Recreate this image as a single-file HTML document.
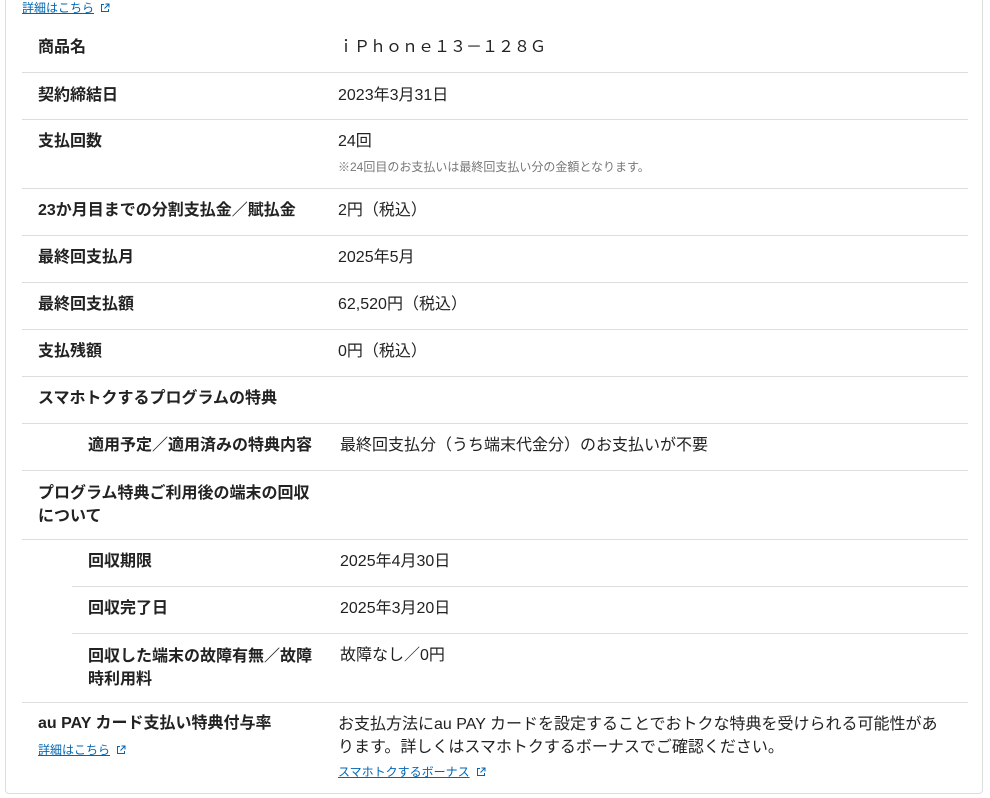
<!DOCTYPE html>
<html><head><meta charset="utf-8"><style>
body{margin:0;width:990px;height:798px;background:#fff;font-family:"Liberation Sans","Noto Sans CJK JP",sans-serif;color:#222;position:relative;overflow:hidden}
.card{position:absolute;left:5px;top:-10px;width:978px;height:804px;border:1px solid #ddd;border-radius:4px;box-sizing:border-box}
.t{position:absolute;line-height:22px;font-size:16px;white-space:nowrap}
.b{font-weight:bold}
.l{position:absolute;height:1px;background:#ddd;right:22px}
.a{position:absolute;font-size:12px;color:#0066b3;text-decoration:underline;line-height:16px;white-space:nowrap}
.a svg{vertical-align:-1px;margin-left:6px}
.n{position:absolute;font-size:12px;color:#777;line-height:16px;white-space:nowrap}
</style></head><body>
<div class="card"></div>
<div class="a" style="left:22px;top:0">詳細はこちら<svg width="10" height="10" viewBox="0 0 10 10" fill="none" stroke="#0066b3" stroke-width="1"><path d="M4 1.5H1.5V8.5H8.5V6M5.5 1H9V4.5M9 1L4.5 5.5"/></svg></div>

<div class="t b" style="left:38px;top:37px">商品名</div>
<div class="t" style="left:338px;top:37px">ｉＰｈｏｎｅ１３－１２８Ｇ</div>
<div class="l" style="left:22px;top:72px"></div>
<div class="t b" style="left:38px;top:85px">契約締結日</div>
<div class="t" style="left:338px;top:85px">2023年3月31日</div>
<div class="l" style="left:22px;top:119px"></div>
<div class="t b" style="left:38px;top:131px">支払回数</div>
<div class="t" style="left:338px;top:131px">24回</div>
<div class="n" style="left:338px;top:159px">※24回目のお支払いは最終回支払い分の金額となります。</div>
<div class="l" style="left:22px;top:188px"></div>
<div class="t b" style="left:38px;top:200px">23か月目までの分割支払金／賦払金</div>
<div class="t" style="left:338px;top:200px">2円（税込）</div>
<div class="l" style="left:22px;top:235px"></div>
<div class="t b" style="left:38px;top:247px">最終回支払月</div>
<div class="t" style="left:338px;top:247px">2025年5月</div>
<div class="l" style="left:22px;top:282px"></div>
<div class="t b" style="left:38px;top:294px">最終回支払額</div>
<div class="t" style="left:338px;top:294px">62,520円（税込）</div>
<div class="l" style="left:22px;top:329px"></div>
<div class="t b" style="left:38px;top:341px">支払残額</div>
<div class="t" style="left:338px;top:341px">0円（税込）</div>
<div class="l" style="left:22px;top:376px"></div>
<div class="t b" style="left:38px;top:388px">スマホトクするプログラムの特典</div>
<div class="l" style="left:22px;top:423px"></div>
<div class="t b" style="left:88px;top:435px">適用予定／適用済みの特典内容</div>
<div class="t" style="left:340px;top:435px">最終回支払分（うち端末代金分）のお支払いが不要</div>
<div class="l" style="left:22px;top:470px"></div>
<div class="t b" style="left:38px;top:482px;line-height:23px">プログラム特典ご利用後の端末の回収<br>について</div>
<div class="l" style="left:22px;top:539px"></div>
<div class="t b" style="left:88px;top:551px">回収期限</div>
<div class="t" style="left:340px;top:551px">2025年4月30日</div>
<div class="l" style="left:72px;top:586px"></div>
<div class="t b" style="left:88px;top:598px">回収完了日</div>
<div class="t" style="left:340px;top:598px">2025年3月20日</div>
<div class="l" style="left:72px;top:633px"></div>
<div class="t b" style="left:88px;top:645px;line-height:23px">回収した端末の故障有無／故障<br>時利用料</div>
<div class="t" style="left:340px;top:645px">故障なし／0円</div>
<div class="l" style="left:22px;top:702px"></div>
<div class="t b" style="left:38px;top:713px">au PAY カード支払い特典付与率</div>
<div class="a" style="left:38px;top:742px">詳細はこちら<svg width="10" height="10" viewBox="0 0 10 10" fill="none" stroke="#0066b3" stroke-width="1"><path d="M4 1.5H1.5V8.5H8.5V6M5.5 1H9V4.5M9 1L4.5 5.5"/></svg></div>
<div class="t" style="left:338px;top:713px;line-height:23px">お支払方法にau PAY カードを設定することでおトクな特典を受けられる可能性があ<br>ります。詳しくはスマホトクするボーナスでご確認ください。</div>
<div class="a" style="left:338px;top:764px">スマホトクするボーナス<svg width="10" height="10" viewBox="0 0 10 10" fill="none" stroke="#0066b3" stroke-width="1"><path d="M4 1.5H1.5V8.5H8.5V6M5.5 1H9V4.5M9 1L4.5 5.5"/></svg></div>
</body></html>
